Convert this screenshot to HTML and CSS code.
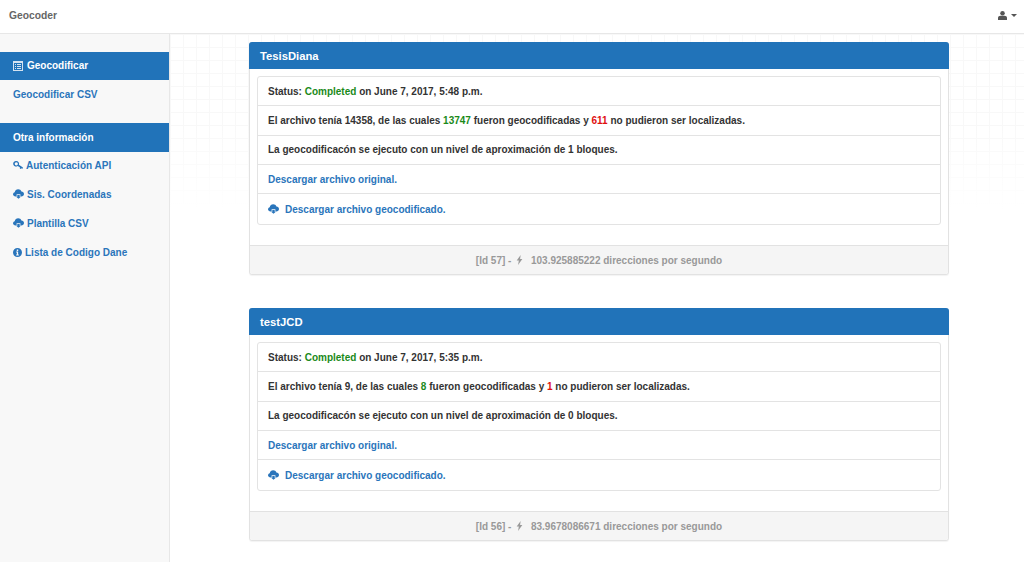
FILE: index.html
```html
<!DOCTYPE html>
<html lang="es">
<head>
<meta charset="utf-8">
<title>Geocoder</title>
<link rel="stylesheet" href="styles.css">
</head>
<body>
<svg class="sprite" width="0" height="0" aria-hidden="true">
  <symbol id="cloud" viewBox="0 0 14 12"><path d="M3.2 9.2C1.4 9.2 0 8 0 6.4c0-1.3.9-2.4 2.2-2.7C2.6 1.6 4.4 0 6.6 0c1.900 0 3.500 1.100 4.100 2.800C12.600 2.900 14 4.300 14 6c0 1.800-1.500 3.200-3.400 3.200H9.400V6.300H4.600v2.900z"/><path d="M5.500 7.200h3v2.300h1.500L7 12 4 9.500h1.500z"/></symbol>
  <symbol id="bolt" viewBox="0 0 8 12"><path d="M5.400 0 .6 6.700h2.600L2.300 12l5.100-7.300H4.700z"/></symbol>
</svg>
<header class="navbar">
  <span class="brand">Geocoder</span>
  <span class="user">
    <svg class="icon-user" viewBox="0 0 10 10"><circle cx="5" cy="2.600" r="2.500"/><path d="M0 10V7.800C0 6.300 1.300 5.300 2.800 5.300h4.400C8.700 5.300 10 6.300 10 7.800V10z"/></svg>
    <span class="caret"></span>
  </span>
</header>
<div class="layout">
  <aside class="sidebar">
    <div class="side-title">
      <svg class="icon-list" viewBox="0 0 10 10"><path d="M0 0h10v10H0zm1 2v7h8V2zm1 1h1v1H2zm2 0h4v1H4zM2 5h1v1H2zm2 0h4v1H4zM2 7h1v1H2zm2 0h4v1H4z" fill-rule="evenodd"/></svg>
      Geocodificar
    </div>
    <a class="side-link">Geocodificar CSV</a>
    <div class="side-title side-gap">Otra información</div>
    <a class="side-link">
      <svg class="icon-key" viewBox="0 0 10 10"><path d="M3.300 1a2.800 2.800 0 0 1 2.600 3.800L10 7.600 9.300 9 8.300 8.300 7.600 9 6.800 8.500l.2-1L4.800 5.900A2.800 2.800 0 1 1 3.300 1zm0 1.200a1.600 1.600 0 1 0 0 3.200 1.600 1.600 0 0 0 0-3.200z" fill-rule="evenodd"/></svg>
      Autenticación API
    </a>
    <a class="side-link"><svg class="icon-cloud"><use href="#cloud"/></svg>Sis. Coordenadas</a>
    <a class="side-link"><svg class="icon-cloud"><use href="#cloud"/></svg>Plantilla CSV</a>
    <a class="side-link">
      <svg class="icon-info" viewBox="0 0 10 10"><path d="M5 0a5 5 0 1 1 0 10A5 5 0 0 1 5 0zM4.200 1.700v1.500h1.600V1.700zM3.500 4v1h.8v2.300h-.8v1h3v-1h-.8V4z" fill-rule="evenodd"/></svg>
      Lista de Codigo Dane
    </a>
  </aside>
  <main class="content">
    <section class="panel">
      <h2 class="panel-heading">TesisDiana</h2>
      <div class="panel-body">
        <ul class="list">
          <li>Status: <span class="ok">Completed</span> on June 7, 2017, 5:48 p.m.</li>
          <li>El archivo tenía 14358, de las cuales <span class="ok">13747</span> fueron geocodificadas y <span class="bad">611</span> no pudieron ser localizadas.</li>
          <li>La geocodificacón se ejecuto con un nivel de aproximación de 1 bloques.</li>
          <li><a>Descargar archivo original.</a></li>
          <li><a class="dl"><svg class="icon-cloud"><use href="#cloud"/></svg>Descargar archivo geocodificado.</a></li>
        </ul>
      </div>
      <footer class="panel-footer">[Id 57] - <svg class="icon-bolt"><use href="#bolt"/></svg> 103.925885222 direcciones por segundo</footer>
    </section>
    <section class="panel">
      <h2 class="panel-heading">testJCD</h2>
      <div class="panel-body">
        <ul class="list">
          <li>Status: <span class="ok">Completed</span> on June 7, 2017, 5:35 p.m.</li>
          <li>El archivo tenía 9, de las cuales <span class="ok">8</span> fueron geocodificadas y <span class="bad">1</span> no pudieron ser localizadas.</li>
          <li>La geocodificacón se ejecuto con un nivel de aproximación de 0 bloques.</li>
          <li><a>Descargar archivo original.</a></li>
          <li><a class="dl"><svg class="icon-cloud"><use href="#cloud"/></svg>Descargar archivo geocodificado.</a></li>
        </ul>
      </div>
      <footer class="panel-footer">[Id 56] - <svg class="icon-bolt"><use href="#bolt"/></svg> 83.9678086671 direcciones por segundo</footer>
    </section>
  </main>
</div>
</body>
</html>
```

FILE: styles.css
```css
* { box-sizing: border-box; }
html, body { margin: 0; height: 100%; overflow: hidden; }
body {
  font-family: "Liberation Sans", Arial, sans-serif;
  font-size: 10px;
  font-weight: 700;
  color: #333;
  background: #fff;
}
.sprite { display: block; width: 0; height: 0; }
.navbar {
  height: 34px;
  display: flex;
  align-items: center;
  justify-content: space-between;
  padding: 0 7px 2px 9px;
  background: #fff;
  border-bottom: 1px solid #e7e7e7;
}
.brand { color: #666; font-size: 10.3px; }
.user { display: flex; align-items: center; gap: 4px; color: #555; }
.icon-user { width: 9px; height: 9px; fill: #555; }
.caret {
  width: 0;
  height: 0;
  border-left: 3px solid transparent;
  border-right: 3px solid transparent;
  border-top: 3px solid #555;
}
.layout { display: flex; height: 528px; }
.sidebar {
  flex: 0 0 170px;
  padding-top: 17.5px;
  background: #f8f8f8;
  border-right: 1px solid #e7e7e7;
}
.side-title {
  height: 28.5px;
  display: flex;
  align-items: center;
  gap: 4px;
  padding-left: 13px;
  color: #fff;
  background: #2173b9;
}
.side-gap { margin-top: 14px; }
.side-link {
  height: 29px;
  display: flex;
  align-items: center;
  gap: 3px;
  padding-left: 13px;
  color: #2a75bb;
}
.side-gap + .side-link { margin-top: -1px; }
.icon-list { width: 10px; height: 10px; fill: #d5e3f0; }
.icon-key { width: 10px; height: 10px; fill: #2a75bb; }
.icon-info { width: 9px; height: 9px; fill: #2a75bb; }
.icon-cloud { width: 11px; height: 10px; fill: #2a75bb; flex: none; }
.icon-bolt { width: 7px; height: 10px; fill: #999; margin: 0 5px 0 2px; vertical-align: -1px; }
.content {
  flex: 1;
  padding: 8px 75px 0 79px;
  background-color: #fff;
  background-image:
    linear-gradient(to bottom, rgba(255,255,255,0) 0, rgba(255,255,255,0) 90px, #fff 175px),
    linear-gradient(#f8f8f8 1px, transparent 1px),
    linear-gradient(90deg, #f8f8f8 1px, transparent 1px);
  background-size: 100% 100%, 13px 13px, 13px 13px;
}
.panel {
  height: 233px;
  margin-bottom: 33px;
  display: flex;
  flex-direction: column;
  background: #fff;
  border: 1px solid #e2e2e2;
  border-radius: 3px;
  box-shadow: 0 1px 1px rgba(0,0,0,.05);
}
.panel-heading {
  flex: none;
  height: 27px;
  margin: -1px -1px 0;
  padding: 0 11px;
  display: flex;
  align-items: center;
  font-size: 11.25px;
  font-weight: 700;
  color: #fff;
  background: #2173b9;
  border-radius: 3px 3px 0 0;
}
.panel-body { flex: 1; padding: 8px 7px 0; }
.list {
  list-style: none;
  margin: -1px 0 0;
  padding: 0;
  background: #fff;
  border: 1px solid #e3e3e3;
  border-radius: 3px;
}
.list li {
  height: 29.35px;
  display: flex;
  align-items: center;
  white-space: pre-wrap;
  padding: 0 10px;
  color: #333;
  border-bottom: 1px solid #e3e3e3;
}
.list li:last-child { border-bottom: 0; }
.list a { color: #2a75bb; }
.dl { display: flex; align-items: center; gap: 6px; }
.ok { color: #1a8a1a; }
.bad { color: #e01010; }
.panel-footer {
  flex: none;
  height: 29px;
  display: flex;
  align-items: center;
  justify-content: center;
  white-space: pre-wrap;
  color: #999;
  background: #f5f5f5;
  border-top: 1px solid #e2e2e2;
  border-radius: 0 0 3px 3px;
}
```
